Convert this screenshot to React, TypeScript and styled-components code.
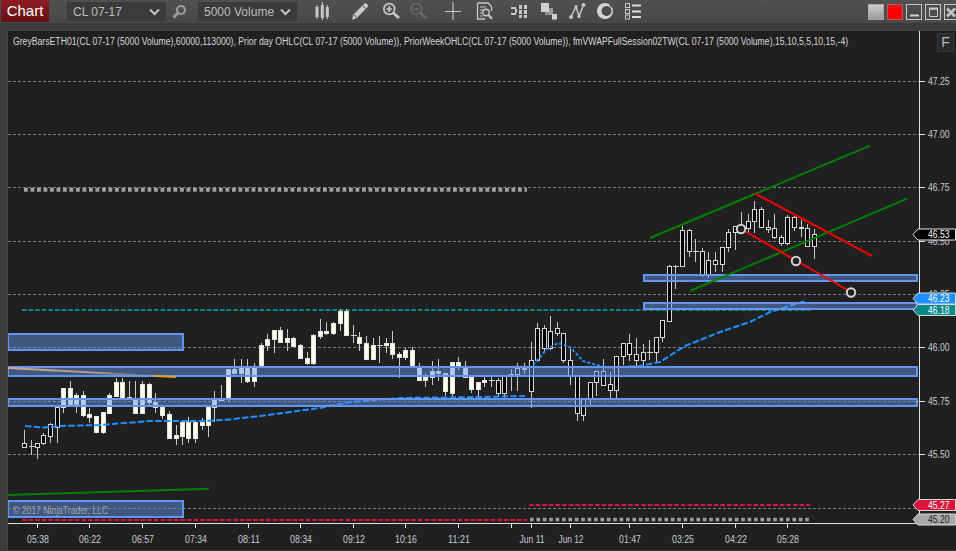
import React from "react";
import styled, { createGlobalStyle } from "styled-components";

const Global = createGlobalStyle`
  html, body { margin: 0; padding: 0; background: #3b3b3b; overflow: hidden; }
  #root { width: 956px; height: 551px; }
`;

const Page = styled.div`
  width: 956px; height: 551px; display: flex; flex-direction: column;
  background: #3b3b3b; font-family: "Liberation Sans", Arial, sans-serif; overflow: hidden;
`;
const Toolbar = styled.div`
  height: 23px; flex: none; display: flex; align-items: flex-start; position: relative;
  background: linear-gradient(#505050, #484848);
`;
const ChartTab = styled.div`
  width: 48px; height: 22px; margin-left: 1px; flex: none; display: flex; align-items: center; justify-content: center;
  background: linear-gradient(#8f1d25, #64100f); color: #fff; font-size: 15px; line-height: 22px;
`;
const Combo = styled.div<{ $ml: number }>`
  width: 99px; height: 19px; margin: 2px 0 0 ${p => p.$ml}px; flex: none; display: flex; align-items: center;
  justify-content: space-between; padding: 0 6px; box-sizing: border-box; background: #3b3b3b;
  color: #bdbdbd; font-size: 12px;
`;
const IconSlot = styled.div<{ $ml: number; $w?: number }>`
  width: ${p => p.$w ?? 18}px; height: 22px; margin-left: ${p => p.$ml}px; flex: none;
  display: flex; align-items: center; justify-content: center;
`;
const Spacer = styled.div`flex: 1;`;
const WinBtn = styled.div<{ $kind: "gray" | "red" | "frame" }>`
  width: 16px; height: 16px; margin: 4px 3px 0 0; flex: none; display: flex; align-items: center; justify-content: center;
  box-sizing: border-box;
  background: ${p => p.$kind === "gray" ? "linear-gradient(#cdcdcd,#9a9a9a)" : p.$kind === "red" ? "linear-gradient(#e81414,#ff0000 40%)" : "transparent"};
  border: 1px solid ${p => p.$kind === "frame" ? "#c8c8c8" : p.$kind === "gray" ? "#a8a8a8" : "#a86060"};
`;
const CloseBtn = styled(WinBtn)`margin-right: 0; width: 12px; border-right: none; overflow: hidden; justify-content: flex-start; padding-left: 1px;`;
const ChartWrap = styled.div`
  flex: none; height: 519px; margin: 7px 0 0 7px; position: relative; background: #202020;
  border-left: 1px solid #484848; border-top: 1px solid #484848;
`;
const ChartSvg = styled.svg`
  display: block; width: 948px; height: 519px; font-family: "Liberation Sans", Arial, sans-serif;
`;
const Legend = styled.div`
  position: absolute; left: 5px; top: 5px; color: #d6d6d6; font-size: 10px; line-height: 12px;
  white-space: nowrap; transform: scaleX(0.866); transform-origin: left center;
`;
const FButton = styled.div`
  position: absolute; left: 929px; top: 2px; width: 17px; height: 19px; background: #2a2a2a;
  border: 1px solid #3a3a3a; box-sizing: border-box; color: #b4bcc4; font-size: 14px; line-height: 17px; text-align: center;
`;
const Copyright = styled.div`
  position: absolute; left: 5px; top: 474px; color: #a4a4a4; font-size: 10px; line-height: 12px; white-space: nowrap;
  transform: scaleX(0.86); transform-origin: left center;
`;

type G = { ox: number; oy: number; c: number[][] };
// x, bodyTop, bodyBottom, wickTop, wickBottom, white(1)
const groups: G[] = [
  { ox: 0, oy: 320, c: [
    [73,368,380,330,380,0],[92,379,379,360,405,0],[112,368,380,368,418,0],[130,346,368,338,375,0],[151,313,347,310,368,0],[170,262,322,262,368,0],
    [190,205,262,205,278,1],[211,205,252,183,252,1],[229,226,252,220,278,1],[250,226,285,213,290,1],[268,283,290,265,308,1],[289,288,335,288,335,1],
    [310,277,335,277,342,1],[328,226,278,220,278,1],[349,187,228,175,228,1],[367,187,233,175,233,1],[388,232,238,183,238,1],[406,238,278,183,278,1],
    [427,192,278,183,278,1],[448,192,245,190,262,1],[466,245,262,220,278,1],[487,262,285,255,297,1],[506,283,353,273,353,1],[527,346,353,315,375,1],
    [547,306,347,306,375,1],[565,306,353,292,370,1],[586,306,353,306,370,1],[605,306,314,295,330,1],[625,260,314,260,352,1],[643,233,260,212,305,1],
    [664,233,240,195,240,1],[685,148,237,148,245,1],[703,148,160,118,160,1],[724,137,160,118,188,1],[742,137,182,118,188,1],[763,137,182,130,200,1],
    [784,76,137,68,137,1],[802,58,76,42,92,1],[823,31,58,31,98,1],[841,31,65,22,65,1],[862,53,65,28,92,1],[880,53,77,50,77,1],[901,76,115,72,118,1],
    [922,115,128,95,135,1],[940,45,128,42,135,1],
  ]},
  { ox: 320, oy: 300, c: [
    [0,92,107,58,118,1],[19,92,100,65,105,1],[40,68,100,65,105,1],[61,33,68,28,93,1],[79,33,106,28,106,1],[100,106,106,75,130,1],[118,112,130,95,152,1],
    [139,130,177,108,177,1],[160,136,176,115,177,1],[178,136,136,108,188,1],[199,130,136,115,160,1],[217,130,163,93,178,1],[238,163,170,155,233,1],
    [256,151,170,145,180,1],[277,151,197,140,197,1],[298,197,241,190,241,1],[316,232,241,218,260,1],[337,214,232,183,255,1],[355,214,220,178,243,1],
    [376,220,272,220,288,1],[397,187,278,187,288,1],[415,187,198,172,210,1],[436,203,232,183,233,1],[454,232,266,232,280,1],[475,247,266,247,292,1],
    [493,241,247,232,260,1],[514,240,240,225,262,0],[535,241,278,235,290,0],[553,228,278,228,293,0],[574,221,228,208,272,0],[592,203,221,190,272,0],
    [613,203,208,190,222,0],[634,181,272,127,323,0],[652,85,181,70,187,0],[673,85,143,75,155,0],[691,92,143,48,150,0],[712,85,100,65,108,0],
    [730,100,181,100,190,0],[751,181,226,145,255,0],[772,226,338,226,362,0],[790,296,344,296,362,0],[811,247,296,247,318,0],[829,214,247,214,288,0],
    [850,214,254,178,254,0],[871,253,271,217,295,0],[889,169,271,169,295,0],[910,130,169,130,195,0],[928,130,163,102,183,0],[949,163,181,115,200,0],
  ]},
  { ox: 640, oy: 280, c: [
    [10,217,241,192,258,0],[28,217,217,180,240,0],[49,172,217,172,250,0],[67,121,172,121,185,0],
  ]},
  { ox: 630, oy: 130, c: [
    [118,408,572,405,572,0],[136,408,408,405,476,0],[157,301,408,287,410,0],[178,301,364,297,380,0],[196,364,364,327,395,0],[217,364,435,355,440,0],
    [235,391,435,365,443,0],[256,391,403,365,425,0],[277,352,403,350,425,0],[295,307,352,297,365,0],[316,289,307,289,360,0],[334,289,307,247,310,0],
    [355,274,295,252,310,0],[373,238,274,213,308,0],[394,238,290,232,295,0],[415,290,296,270,308,0],[433,295,320,253,328,0],[454,320,340,315,347,0],
    [472,262,340,255,345,0],[493,262,290,258,303,0],[514,290,295,270,320,0],[532,295,347,282,347,0],[553,313,347,298,387,0],
  ]},
];

const Candles = () => (
  <g shapeRendering="crispEdges">
    {groups.flatMap((g, gi) =>
      g.c.map((k, i) => {
        const x = Math.round(g.ox + k[0] / 3) + 0.5;
        const bt = Math.round(g.oy + k[1] / 3) + 0.5;
        const bb = Math.round(g.oy + k[2] / 3) + 0.5;
        const wt = g.oy + k[3] / 3;
        const wb = g.oy + k[4] / 3;
        const white = k[5] === 1;
        return (
          <g key={`${gi}-${i}`}>
            <line x1={x} x2={x} y1={wt} y2={wb} stroke="#c8c8c8" strokeWidth={1} />
            {bb - bt < 1
              ? <line x1={x - 3} x2={x + 3} y1={bt} y2={bt} stroke="#d0d0d0" strokeWidth={1} />
              : <rect x={x - 2} y={bt} width={4} height={bb - bt} fill={white ? "#fffff0" : "#000"} stroke={white ? "#e4e4dc" : "#d8d8d8"} strokeWidth={1} />}
          </g>
        );
      })
    )}
  </g>
);

const Zone = ({ x, y, w, h }: { x: number; y: number; w: number; h: number }) => (
  <rect x={x} y={y} width={w} height={h} fill="rgba(100,149,237,0.48)" stroke="#6495ed" strokeWidth={2} />
);

const Tag = ({ y, label, fill, text, stroke }: { y: number; label: string; fill: string; text: string; stroke: string }) => (
  <g>
    <path d={`M913 ${y} L918 ${y - 5.5} H955.5 V${y + 5.5} H918 Z`} fill={fill} stroke={stroke} strokeWidth={1} />
    <text x={928} y={y + 3.8} fill={text} fontSize={10.5} textLength={21.5} lengthAdjust="spacingAndGlyphs">{label}</text>
  </g>
);

const prices = [[81,"47.25"],[134,"47.00"],[187,"46.75"],[241,"46.50"],[294,"46.25"],[347,"46.00"],[401,"45.75"],[454,"45.50"]] as [number,string][];
const grid = [81,134,187,241,294,347,401,454,508];
const timeTicks = [37,89,142,195,248,300,353,405,458,511,531,570,629,682,735,787];
const timeLabels = [[38,"05:38"],[90,"06:22"],[143,"06:57"],[196,"07:34"],[249,"08:11"],[301,"08:34"],[354,"09:12"],[406,"10:16"],[459,"11:21"],[532,"Jun 11"],[571,"Jun 12"],[630,"01:47"],[683,"03:25"],[736,"04:22"],[788,"05:28"]] as [number,string][];

const Chart = () => (
  <ChartSvg viewBox="8 31 948 519">
    <defs>
      <linearGradient id="tan" x1="0" x2="1" y1="0" y2="0">
        <stop offset="0" stopColor="#d2b48c" stopOpacity=".95" />
        <stop offset=".55" stopColor="#d2b48c" stopOpacity=".7" />
        <stop offset=".85" stopColor="#d2b48c" stopOpacity=".08" />
        <stop offset=".88" stopColor="#daa520" />
        <stop offset="1" stopColor="#daa520" />
      </linearGradient>
    </defs>
    <g stroke="#7a7a7a" strokeWidth={1} strokeDasharray="3 2" shapeRendering="crispEdges">
      {grid.map(y => <line key={y} x1={8} x2={919} y1={y + 0.5} y2={y + 0.5} />)}
    </g>
    <line x1={24} x2={527} y1={189.7} y2={189.7} stroke="#a0a0a0" strokeWidth={4} strokeDasharray="3.8 2.7" />
    <line x1={530} x2={810} y1={519.5} y2={519.5} stroke="#a0a0a0" strokeWidth={3.4} strokeDasharray="3.6 2.8" />
    <line x1={22} x2={527} y1={520} y2={520} stroke="#dc143c" strokeWidth={2} strokeDasharray="4.6 2" />
    <line x1={529} x2={810} y1={505} y2={505} stroke="#dc143c" strokeWidth={2} strokeDasharray="4.6 2" />
    <line x1={22} x2={810} y1={310} y2={310} stroke="#008b8b" strokeWidth={2} strokeDasharray="4.6 2" />
    <line x1={8} x2={209} y1={495} y2={488.7} stroke="#008000" strokeWidth={2} />
    <Candles />
    <polyline fill="none" stroke="#1e90ff" strokeWidth={2} strokeDasharray="6.5 2.2"
      points="25,426 45,427.5 60,426 100,425 150,421 200,421 225,420 260,416 320,408 350,402 400,398 480,397 525,396" />
    <polyline fill="none" stroke="#1e90ff" strokeWidth={2} strokeDasharray="3 2"
      points="533,365 547,349 558,343 570,347 583,361 597,365 610,368 620,367" />
    <polyline fill="none" stroke="#1e90ff" strokeWidth={2} strokeDasharray="6.5 2.2"
      points="620,367 640,366 660,362 685,346 700,340 720,332 750,322 770,312 805,301" />
    <Zone x={8} y={334} w={175} h={16} />
    <Zone x={8} y={367} w={909} h={9} />
    <Zone x={8} y={399} w={909} h={7} />
    <Zone x={8} y={501} w={175} h={16} />
    <Zone x={644} y={275} w={273} h={6} />
    <Zone x={644} y={303} w={273} h={6} />
    <line x1={8} x2={176} y1={368} y2={377} stroke="url(#tan)" strokeWidth={2} />
    <line x1={650} y1={238} x2={870} y2={145.7} stroke="#008000" strokeWidth={2} />
    <line x1={690} y1={291} x2={907} y2={198.7} stroke="#008000" strokeWidth={2} />
    <line x1={755} y1={193.5} x2={872} y2={256} stroke="#f00000" strokeWidth={2} />
    <line x1={741} y1={229} x2={851} y2={292} stroke="#f00000" strokeWidth={2} />
    {[[741,229],[796,261],[851,292.5]].map(([x,y]) => (
      <circle key={x} cx={x} cy={y} r={4.2} fill="#202020" stroke="#d4d4d4" strokeWidth={2} />
    ))}
    <g stroke="#e0e0e0" strokeWidth={1} shapeRendering="crispEdges">
      <line x1={919.5} x2={919.5} y1={31} y2={523} />
      <line x1={8} x2={920} y1={523.5} y2={523.5} />
      {prices.map(([y]) => <line key={y} x1={920} x2={925} y1={y + 0.5} y2={y + 0.5} />)}
      {timeTicks.map(x => <line key={x} x1={x + 0.5} x2={x + 0.5} y1={523} y2={528} />)}
    </g>
    <g fill="#c8ccd0" fontSize={10.5}>
      {prices.map(([y, t]) => <text key={t} x={928} y={y + 4} textLength={21.5} lengthAdjust="spacingAndGlyphs">{t}</text>)}
      {timeLabels.map(([x, t]) => <text key={t} x={x - (t.length > 5 ? 12.5 : 10.9)} y={543} textLength={t.length > 5 ? 25 : 21.8} lengthAdjust="spacingAndGlyphs">{t}</text>)}
    </g>
    <Tag y={234.5} label="46.53" fill="#000" text="#fff" stroke="#e8e8e8" />
    <Tag y={298.5} label="46.23" fill="#1e90ff" text="#fff" stroke="#d8d8d8" />
    <Tag y={310} label="46.18" fill="#008b8b" text="#fff" stroke="#d8d8d8" />
    <Tag y={505} label="45.27" fill="#dc143c" text="#fff" stroke="#d8d8d8" />
    <Tag y={519.5} label="45.20" fill="#a9a9a9" text="#222" stroke="#d8d8d8" />
  </ChartSvg>
);

const Chevron = () => (
  <svg width="11" height="8" viewBox="0 0 11 8"><path d="M1 1.5 L5.5 6 L10 1.5" fill="none" stroke="#c4c4c4" strokeWidth="2" /></svg>
);
const I = ({ children, w = 18, h = 18 }: { children: React.ReactNode; w?: number; h?: number }) => (
  <svg width={w} height={h} viewBox={`0 0 ${w} ${h}`}>{children}</svg>
);
const c = "#c8c8c8";

const Search = () => <I w={15} h={15}><circle cx="9" cy="6" r="4" fill="none" stroke="#9c9c9c" strokeWidth="2.2" /><path d="M6 9 L1.5 13.5" stroke="#9c9c9c" strokeWidth="3" /></I>;
const Bars = () => <I><g stroke={c}><path d="M4 3V17M9.3 0V18M14.3 3V17" strokeWidth="1" /><path d="M4 5V15M9.3 3V16M14.3 5V15" strokeWidth="3" /></g></I>;
const Pencil = () => <I><path d="M1 18 L2.4 12.6 L12.6 2.4 L14.6 1 L17.4 3.4 L16.2 5.6 L6 15.8 Z" fill={c} /><path d="M3 12.6 L5.8 15.4 M11.6 3.6 L14.6 6.6" stroke="#4c4c4c" strokeWidth="1" /></I>;
const ZoomIco = ({ plus, col }: { plus?: boolean; col: string }) => (
  <I>
    <circle cx="7.3" cy="7" r="5.4" fill="none" stroke={col} strokeWidth="1.7" />
    <path d="M11.4 11 L17 16" stroke={col} strokeWidth="2.8" />
    <path d={plus ? "M4.4 7H10.2M7.3 4.1V9.9" : "M4.4 7H10.2"} stroke={col} strokeWidth="1.6" />
  </I>
);
const Cross = () => <I><path d="M9 0V18M1 9.5H17" stroke={c} strokeWidth="1.1" /></I>;
const DocSearch = () => <I><path d="M1.5 1H12L15.5 4.5V9M1.5 1V17H9" fill="none" stroke={c} strokeWidth="1.3" /><path d="M4 5H10M4 8H7M4 11H6M4 14H6.5" stroke={c} /><circle cx="10" cy="10.5" r="3.2" fill="none" stroke={c} strokeWidth="1.4" /><path d="M12.4 13L16 16.8" stroke={c} strokeWidth="2.2" /></I>;
const Props = () => <I><g fill={c}><rect x="1" y="5" width="5" height="2" /><rect x="1" y="11" width="5" height="2" /><rect x="5" y="7" width="2" height="4" />
  <rect x="9" y="3" width="3" height="4" /><rect x="9" y="8" width="3" height="4" /><rect x="9" y="13" width="3" height="3" /><rect x="14" y="3" width="3" height="4" /><rect x="14" y="8" width="3" height="4" /><rect x="14" y="13" width="3" height="3" /></g></I>;
const Layers = () => <I><rect x="1" y="1" width="8" height="9" fill="#d0d0d0" /><rect x="9" y="6" width="4" height="7" fill="#9c9c9c" /><rect x="5" y="10" width="4" height="3" fill="#8c8c8c" /><rect x="12" y="12" width="5" height="5.5" fill="#d0d0d0" /></I>;
const Draw = () => <I><path d="M3 15 L8 4.5 L11 14.5 L15.5 3" fill="none" stroke={c} strokeWidth="1.5" /><g fill={c}><circle cx="3" cy="15" r="2" /><circle cx="8" cy="4.5" r="1.5" /><circle cx="15.5" cy="3" r="2" /><circle cx="11" cy="14.5" r="1.5" /></g></I>;
const Ring = () => <I><path fillRule="evenodd" d="M9 1a8 8 0 1 0 0.01 0Z M10.5 4a5 5 0 1 0 0.01 0Z" fill="#d4d4d4" /><path d="M12.5 0.5 L17.5 2 L15 6 Z" fill="#4c4c4c" /></I>;
const ListIco = () => <I><g fill="none" stroke={c}><rect x="1.5" y="1.5" width="4" height="4" /><rect x="1.5" y="7.5" width="4" height="4" /><rect x="1.5" y="13" width="4" height="4" /></g><path d="M8 3.5H17M8 9.5H17M8 15H17" stroke="#dcdcdc" strokeWidth="2" /></I>;

export default function App() {
  return (
    <Page>
      <Global />
      <Toolbar>
        <ChartTab>Chart</ChartTab>
        <Combo $ml={18}>CL 07-17<Chevron /></Combo>
        <IconSlot $ml={5} $w={16}><Search /></IconSlot>
        <Combo $ml={11}>5000 Volume<Chevron /></Combo>
        <IconSlot $ml={16}><Bars /></IconSlot>
        <IconSlot $ml={20}><Pencil /></IconSlot>
        <IconSlot $ml={13}><ZoomIco plus col={c} /></IconSlot>
        <IconSlot $ml={9}><ZoomIco col="#686868" /></IconSlot>
        <IconSlot $ml={17}><Cross /></IconSlot>
        <IconSlot $ml={14}><DocSearch /></IconSlot>
        <IconSlot $ml={16}><Props /></IconSlot>
        <IconSlot $ml={12}><Layers /></IconSlot>
        <IconSlot $ml={10}><Draw /></IconSlot>
        <IconSlot $ml={10}><Ring /></IconSlot>
        <IconSlot $ml={10}><ListIco /></IconSlot>
        <Spacer />
        <WinBtn $kind="gray" />
        <WinBtn $kind="red" />
        <WinBtn $kind="frame"><svg width="12" height="12"><path d="M2 9.5H11" stroke="#d0d0d0" strokeWidth="2" /></svg></WinBtn>
        <WinBtn $kind="frame"><svg width="12" height="12"><path d="M2.5 3H10.5V10.5H2.5Z" fill="none" stroke="#c8c8c8" /><path d="M2 2.5H11" stroke="#c8c8c8" strokeWidth="2" /></svg></WinBtn>
        <CloseBtn $kind="frame"><svg width="11" height="11" style={{ flex: "none" }}><path d="M1 1.5L9 9.5M9 1.5L1 9.5" stroke="#c4c4c4" strokeWidth="2.6" /></svg></CloseBtn>
      </Toolbar>
      <ChartWrap>
        <Chart />
        <Legend>GreyBarsETH01(CL 07-17 (5000 Volume),60000,113000), Prior day OHLC(CL 07-17 (5000 Volume)), PriorWeekOHLC(CL 07-17 (5000 Volume)), fmVWAPFullSession02TW(CL 07-17 (5000 Volume),15,10,5,5,10,15,-4)</Legend>
        <FButton>F</FButton>
        <Copyright>© 2017 NinjaTrader, LLC</Copyright>
      </ChartWrap>
    </Page>
  );
}
